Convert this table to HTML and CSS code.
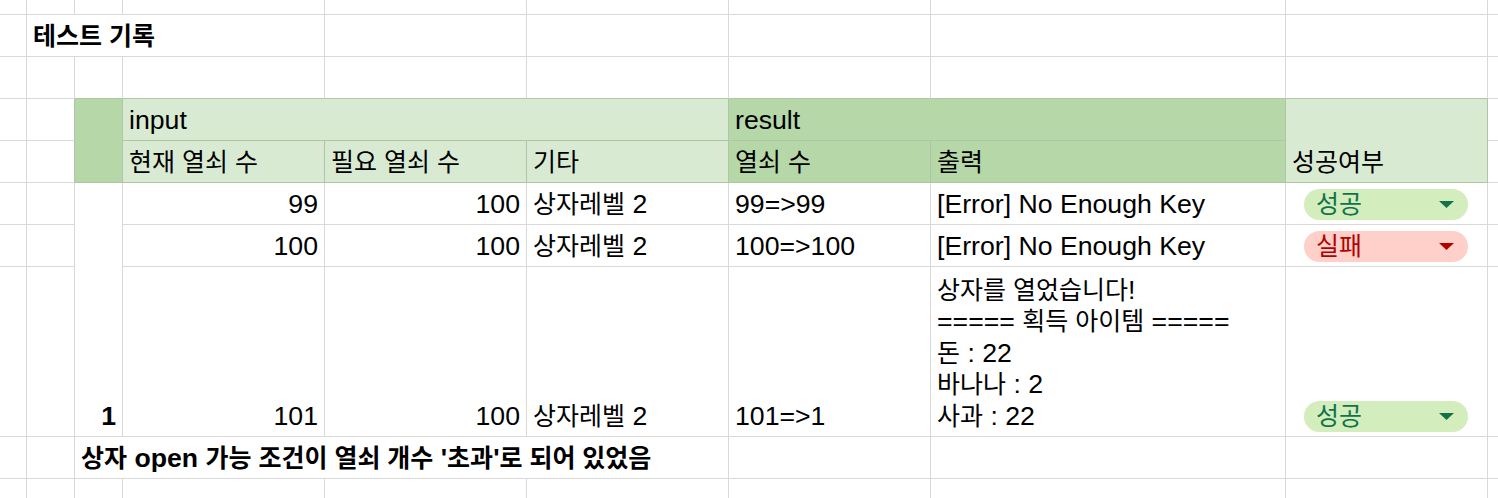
FILE: index.html
```html
<!DOCTYPE html>
<html lang="ko">
<head>
<meta charset="utf-8">
<title>테스트 기록</title>
<link rel="stylesheet" href="styles.css">
</head>
<body>
<div class="sheet">
  <!-- row 1 -->
  <div class="c"></div><div class="c"></div><div class="c"></div><div class="c"></div><div class="c"></div>
  <div class="c"></div><div class="c"></div><div class="c"></div><div class="c"></div><div class="c"></div>

  <!-- row 2 -->
  <div class="c"></div>
  <div class="c s3 bold"><span class="v"><span class="k">테스트 기록</span></span></div>
  <div class="c"></div><div class="c"></div><div class="c"></div><div class="c"></div><div class="c"></div><div class="c"></div>

  <!-- row 3 -->
  <div class="c"></div><div class="c"></div>
  <div class="c hb"></div><div class="c hb"></div><div class="c hb"></div><div class="c hb"></div>
  <div class="c hb"></div><div class="c hb"></div><div class="c hb"></div>
  <div class="c"></div>

  <!-- row 4 (header 1) -->
  <div class="c"></div>
  <div class="c hr"></div>
  <div class="c h dk r2"></div>
  <div class="c h lt s3"><span class="v">input</span></div>
  <div class="c h dk s2"><span class="v">result</span></div>
  <div class="c h lt r2"><span class="v"><span class="k">성공여부</span></span></div>
  <div class="c"></div>

  <!-- row 5 (header 2) -->
  <div class="c"></div>
  <div class="c hr"></div>
  <div class="c h lt"><span class="v"><span class="k">현재 열쇠 수</span></span></div>
  <div class="c h lt"><span class="v"><span class="k">필요 열쇠 수</span></span></div>
  <div class="c h lt"><span class="v"><span class="k">기타</span></span></div>
  <div class="c h dk"><span class="v"><span class="k">열쇠 수</span></span></div>
  <div class="c h dk"><span class="v"><span class="k">출력</span></span></div>
  <div class="c"></div>

  <!-- row 6 -->
  <div class="c"></div>
  <div class="c"></div>
  <div class="c r3 right bold"><span class="v">1</span></div>
  <div class="c right"><span class="v">99</span></div>
  <div class="c right"><span class="v">100</span></div>
  <div class="c"><span class="v"><span class="k">상자레벨</span> 2</span></div>
  <div class="c"><span class="v">99=&gt;99</span></div>
  <div class="c"><span class="v">[Error] No Enough Key</span></div>
  <div class="c chipcell"><div class="chip ok"><span class="k">성공</span><svg class="arrow" width="15" height="7" viewBox="0 0 15 7"><polygon points="0,0 15,0 7.5,7"/></svg></div></div>
  <div class="c"></div>

  <!-- row 7 -->
  <div class="c"></div>
  <div class="c"></div>
  <div class="c right"><span class="v">100</span></div>
  <div class="c right"><span class="v">100</span></div>
  <div class="c"><span class="v"><span class="k">상자레벨</span> 2</span></div>
  <div class="c"><span class="v">100=&gt;100</span></div>
  <div class="c"><span class="v">[Error] No Enough Key</span></div>
  <div class="c chipcell"><div class="chip bad"><span class="k">실패</span><svg class="arrow" width="15" height="7" viewBox="0 0 15 7"><polygon points="0,0 15,0 7.5,7"/></svg></div></div>
  <div class="c"></div>

  <!-- row 8 -->
  <div class="c"></div>
  <div class="c"></div>
  <div class="c right"><span class="v">101</span></div>
  <div class="c right"><span class="v">100</span></div>
  <div class="c"><span class="v"><span class="k">상자레벨</span> 2</span></div>
  <div class="c"><span class="v">101=&gt;1</span></div>
  <div class="c">
    <div class="lines">
      <div><span class="k">상자를 열었습니다</span>!</div>
      <div>===== <span class="k">획득 아이템</span> =====</div>
      <div><span class="k">돈</span> : 22</div>
      <div><span class="k">바나나</span> : 2</div>
      <div><span class="k">사과</span> : 22</div>
    </div>
  </div>
  <div class="c chipcell"><div class="chip ok"><span class="k">성공</span><svg class="arrow" width="15" height="7" viewBox="0 0 15 7"><polygon points="0,0 15,0 7.5,7"/></svg></div></div>
  <div class="c"></div>

  <!-- row 9 -->
  <div class="c"></div>
  <div class="c"></div>
  <div class="c s4 bold"><span class="v"><span class="k">상자</span> open <span class="k">가능 조건이 열쇠 개수</span> '<span class="k">초과</span>'<span class="k">로 되어 있었음</span></span></div>
  <div class="c"></div><div class="c"></div><div class="c"></div><div class="c"></div>

  <!-- row 10 -->
  <div class="c"></div><div class="c"></div><div class="c"></div><div class="c"></div><div class="c"></div>
  <div class="c"></div><div class="c"></div><div class="c"></div><div class="c"></div><div class="c"></div>
</div>
</body>
</html>
```

FILE: styles.css
```css
html, body {
  margin: 0;
  padding: 0;
  background: #ffffff;
}

body {
  font-family: "Liberation Sans", "Noto Sans CJK KR", sans-serif;
  font-size: 26.67px;
  color: #000000;
  overflow: hidden;
}

.sheet {
  display: grid;
  grid-template-columns: 27px 48px 48px 202px 202px 202px 202px 355px 202px 10px;
  grid-template-rows: 15px 42px 42px 42px 42px 42px 42px 170px 42px 20px;
  width: 1498px;
}

.c {
  box-sizing: border-box;
  border-right: 1px solid #d9d9d9;
  border-bottom: 1px solid #d9d9d9;
  display: flex;
  align-items: flex-end;
  padding: 0 6px 4px 6px;
  line-height: 31.5px;
  white-space: nowrap;
  min-width: 0;
  overflow: visible;
}

.v {
  display: block;
}

.k {
  font-size: 25px;
}

.s2 { grid-column: span 2; }
.s3 { grid-column: span 3; }
.s4 { grid-column: span 4; }
.r2 { grid-row: span 2; }
.r3 { grid-row: span 3; }

.right { justify-content: flex-end; }
.bold { font-weight: 700; }

/* header block */
.h { border-color: #afc6a5; }
.hb { border-bottom-color: #afc6a5; }
.hr { border-right-color: #afc6a5; }
.dk { background: #b6d7a8; }
.lt { background: #d9ead3; }

.lines {
  display: flex;
  flex-direction: column;
}

/* dropdown chips */
.chipcell {
  padding: 0 19px 4px 18px;
}

.chip {
  flex: 1;
  height: 31px;
  border-radius: 16px;
  display: flex;
  align-items: center;
  justify-content: space-between;
  padding: 0 14px 0 12px;
  line-height: 31px;
}

.chip.ok {
  background: #d4edbc;
  color: #11734b;
}

.chip.bad {
  background: #ffcfc9;
  color: #b10202;
}

.arrow {
  display: block;
  fill: currentColor;
}
```
